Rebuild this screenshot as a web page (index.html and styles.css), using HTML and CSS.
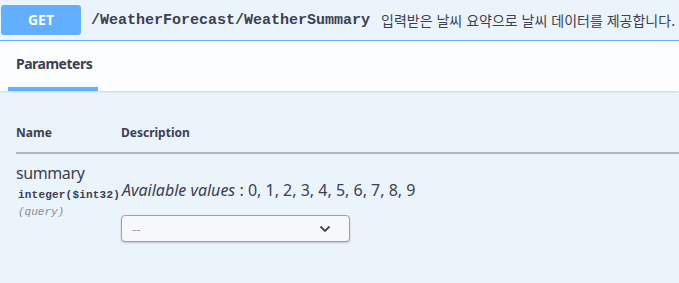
FILE: index.html
```html
<!DOCTYPE html>
<html lang="ko">
<head>
  <meta charset="UTF-8">
  <title>WeatherSummary</title>
  <link rel="stylesheet" href="styles.css">
</head>
<body>

  <div class="opblock">
    <div class="opblock-summary">
      <span class="method">GET</span>
      <span class="path">/WeatherForecast/WeatherSummary</span>
      <span class="desc">입력받은 날씨 요약으로 날씨 데이터를 제공합니다.</span>
    </div>

    <div class="section-header">
      <h4 class="tab">Parameters</h4>
    </div>

    <div class="params">
      <table>
        <tr class="head">
          <th class="col-name">Name</th>
          <th>Description</th>
        </tr>
        <tr class="param">
          <td class="col-name">
            <div class="param-name">summary</div>
            <div class="param-type">integer($int32)</div>
            <div class="param-in">(query)</div>
          </td>
          <td class="col-desc">
            <p class="avail"><i>Available values</i> : 0, 1, 2, 3, 4, 5, 6, 7, 8, 9</p>
            <div class="select">
              <span>--</span>
              <svg width="12" height="8" viewBox="0 0 12 8"><path d="M1.5 1.5 L6 6 L10.5 1.5" fill="none" stroke="#3b4151" stroke-width="1.8"/></svg>
            </div>
          </td>
        </tr>
      </table>
    </div>
  </div>

</body>
</html>
```

FILE: styles.css
```css
body { margin: 0; background: #ebf3fb; color: #3b4151; font-family: "Noto Sans", "Noto Sans CJK KR", sans-serif; }
.opblock { background: #ebf3fb; min-height: 283px; }
.opblock-summary { display: flex; align-items: center; height: 40px; padding-left: 1px; border-bottom: 1px solid #61affe; white-space: nowrap; overflow: hidden; }
.method { flex: none; width: 80px; height: 30px; line-height: 30px; text-align: center; background: #61affe; color: #fff; border-radius: 3px; font-size: 14px; font-weight: 700; }
.path { flex: none; margin-left: 10px; font-family: "Liberation Mono", monospace; font-size: 15px; font-weight: 700; }
.desc { flex: none; margin-left: 11px; font-family: "Noto Sans CJK KR", sans-serif; font-size: 14px; }
.section-header { height: 50px; background: #fcfdff; box-shadow: 0 1px 2px rgba(0,0,0,.12); display: flex; align-items: flex-end; padding-left: 8px; }
.tab { margin: 0; width: 90px; padding: 0 0 14px 8px; box-sizing: border-box; font-size: 14px; font-weight: 700; letter-spacing: -0.5px; border-bottom: 4px solid #61affe; }
.params { padding: 20px 0 0 16px; }
table { width: 100%; border-collapse: collapse; table-layout: fixed; }
th { text-align: left; font-size: 12px; font-weight: 700; padding: 13px 0 11px; border-bottom: 2px solid #b3b7bf; }
.col-name { width: 105px; vertical-align: top; white-space: nowrap; }
td { padding: 9px 0 0; vertical-align: top; }
.param-name { font-size: 16px; line-height: 20px; letter-spacing: -0.4px; }
.param-type { font-family: "Liberation Mono", monospace; font-size: 11px; font-weight: 700; letter-spacing: 0.2px; padding: 6px 0 0 2px; }
.param-in { font-family: "Liberation Mono", monospace; font-size: 11px; font-style: italic; color: #8a8a8a; padding: 5px 0 0 2px; }
.avail { margin: 16px 0 0 1px; font-size: 16px; white-space: nowrap; }
.select { margin-top: 14px; width: 229px; height: 27px; box-sizing: border-box; border: 1px solid #a0a0a8; border-radius: 4px; background: #f7f8fb; box-shadow: 0 1px 2px rgba(0,0,0,.2); display: flex; align-items: center; justify-content: space-between; padding: 0 18px 0 10px; font-size: 13px; color: #a0a0a0; }
```
